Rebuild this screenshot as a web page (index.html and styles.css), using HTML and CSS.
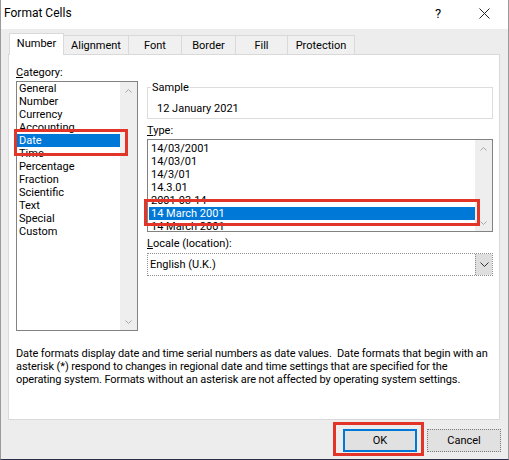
FILE: index.html
```html
<!DOCTYPE html>
<html>
<head>
<meta charset="utf-8">
<link rel="stylesheet" href="styles.css">
</head>
<body>
<div class="dialog">
  <div class="titlebar">
    <span class="title">Format Cells</span>
    <span class="help">?</span>
    <svg class="close" width="11" height="11" viewBox="0 0 11 11"><path d="M0.5 0.5 L10.5 10.5 M10.5 0.5 L0.5 10.5" stroke="#222" stroke-width="1" fill="none"/></svg>
  </div>
  <div class="tabs">
    <div class="tab active">Number</div>
    <div class="tab w-align">Alignment</div>
    <div class="tab w-font">Font</div>
    <div class="tab w-border">Border</div>
    <div class="tab w-fill">Fill</div>
    <div class="tab w-prot">Protection</div>
  </div>
  <div class="panel">
    <div class="cols">
      <div class="left">
        <div class="label"><u>C</u>ategory:</div>
        <div class="listbox cat">
          <div class="items">
            <div class="item">General</div>
            <div class="item">Number</div>
            <div class="item">Currency</div>
            <div class="item">Accounting</div>
            <div class="item sel">Date</div>
            <div class="item">Time</div>
            <div class="item">Percentage</div>
            <div class="item">Fraction</div>
            <div class="item">Scientific</div>
            <div class="item">Text</div>
            <div class="item">Special</div>
            <div class="item">Custom</div>
          </div>
          <div class="vscroll">
            <svg width="7" height="4" viewBox="0 0 7 4"><path d="M0.5 3.5 L3.5 0.5 L6.5 3.5" stroke="#a8a8a8" fill="none"/></svg>
            <svg width="7" height="4" viewBox="0 0 7 4"><path d="M0.5 0.5 L3.5 3.5 L6.5 0.5" stroke="#a8a8a8" fill="none"/></svg>
          </div>
          <span class="mark mark-cat"></span>
        </div>
      </div>
      <div class="right">
        <fieldset class="sample">
          <legend>Sample</legend>
          <div class="sample-text">12 January 2021</div>
        </fieldset>
        <div class="label type-label"><u>T</u>ype:</div>
        <div class="listbox typ">
          <div class="items">
            <div class="item">14/03/2001</div>
            <div class="item">14/03/01</div>
            <div class="item">14/3/01</div>
            <div class="item">14.3.01</div>
            <div class="item">2001-03-14</div>
            <div class="item sel">14 March 2001</div>
            <div class="item">14 March 2001</div>
          </div>
          <div class="vscroll">
            <svg width="7" height="4" viewBox="0 0 7 4"><path d="M0.5 3.5 L3.5 0.5 L6.5 3.5" stroke="#a8a8a8" fill="none"/></svg>
            <svg width="7" height="4" viewBox="0 0 7 4"><path d="M0.5 0.5 L3.5 3.5 L6.5 0.5" stroke="#a8a8a8" fill="none"/></svg>
          </div>
          <span class="mark mark-type"></span>
        </div>
        <div class="label locale-label"><u>L</u>ocale (location):</div>
        <div class="combo">
          <span class="combo-text">English (U.K.)</span>
          <span class="combo-btn"><svg width="9" height="5" viewBox="0 0 9 5"><path d="M0.5 0.5 L4.5 4.5 L8.5 0.5" stroke="#333" fill="none"/></svg></span>
        </div>
      </div>
    </div>
    <p class="desc">Date formats display date and time serial numbers as date values.&nbsp; Date formats that begin with an<br>asterisk (*) respond to changes in regional date and time settings that are specified for the<br>operating system. Formats without an asterisk are not affected by operating system settings.</p>
  </div>
  <div class="buttons">
    <div class="btn ok">OK<span class="mark mark-ok"></span></div>
    <div class="btn cancel">Cancel</div>
  </div>
</div>
</body>
</html>
```

FILE: styles.css
```css
* { box-sizing: border-box; }
html, body { margin: 0; padding: 0; }
body {
  width: 509px;
  height: 460px;
  overflow: hidden;
  font-family: Roboto, "Noto Sans", sans-serif;
  font-size: 11px;
  color: #000;
}
.dialog {
  width: 509px;
  height: 460px;
  background: #ededed;
  border-left: 1px solid #9a9a9a;
  border-right: 1px solid #9a9a9a;
  border-bottom: 1px solid #2c2c4c;
  display: flex;
  flex-direction: column;
}
.titlebar {
  height: 29px;
  background: #fff;
  display: flex;
  align-items: center;
  padding-left: 3px;
  padding-bottom: 3px;
  flex: none;
}
.title { font-size: 12px; flex: 1; }
.help { font-size: 13px; width: 44px; }
.close { margin-right: 18px; }
.tabs {
  display: flex;
  align-items: flex-end;
  height: 25px;
  padding-left: 8px;
  flex: none;
}
.tab {
  height: 19px;
  border: 1px solid #d9d9d9;
  border-bottom: none;
  border-left: none;
  background: #f0f0f0;
  display: flex;
  align-items: center;
  justify-content: center;
}
.tab.active {
  height: 22px;
  width: 55px;
  background: #fff;
  border-left: 1px solid #d9d9d9;
  margin-bottom: -1px;
  position: relative;
  z-index: 1;
  padding-bottom: 2px;
}
.w-align { width: 65px; }
.w-font { width: 53px; }
.w-border { width: 54px; }
.w-fill { width: 52px; }
.w-prot { width: 67px; }
.panel {
  margin-left: 7px;
  width: 492px;
  height: 366px;
  background: #fff;
  border: 1px solid #d9d9d9;
  padding: 11px 0 0 7px;
  flex: none;
}
.cols { display: flex; }
.left { width: 122px; flex: none; }
.right { width: 346px; margin-left: 9px; padding-top: 15px; }
.label { height: 13px; line-height: 13px; white-space: nowrap; }
.listbox {
  position: relative;
  border: 1px solid #828282;
  display: flex;
  background: #fff;
}
.cat { width: 122px; height: 250px; margin-top: 2px; }
.items { flex: 1; overflow: hidden; }
.item {
  height: 13px;
  line-height: 14px;
  padding-left: 2px;
  white-space: nowrap;
}
.item.sel { background: #0078d7; color: #fff; }
.vscroll {
  width: 17px;
  background: #eeeeee;
  display: flex;
  flex-direction: column;
  justify-content: space-between;
  align-items: center;
  padding: 7px 0 6px 0;
}
.mark {
  position: absolute;
  border: 3px solid #e3342a;
  pointer-events: none;
}
.mark-cat { left: -3px; top: 47px; width: 114px; height: 27px; }
.sample {
  margin: 0;
  padding: 0 0 0 9px;
  border: 1px solid #dcdcdc;
  height: 38px;
  width: 346px;
}
.sample legend {
  padding: 0 1px;
  margin-left: -6px;
  line-height: 13px;
}
.sample-text { line-height: 13px; margin-top: 8px; }
.type-label { margin-top: 5px; }
.typ { width: 346px; height: 93px; margin-top: 2px; }
.typ .items { padding: 2px 0 0 1px; }
.typ .item { padding-left: 2px; }
.mark-type { left: -4px; top: 59px; width: 336px; height: 27px; }
.locale-label { margin-top: 5px; }
.combo {
  margin-top: 3px;
  width: 346px;
  height: 23px;
  border: 1px dotted #909090;
  display: flex;
  align-items: center;
}
.combo-text { flex: 1; padding-left: 2px; }
.combo-btn {
  width: 17px;
  height: 21px;
  background: #dedede;
  display: flex;
  align-items: center;
  justify-content: center;
  border-left: 1px dotted #909090;
}
.desc {
  margin: 16px 0 0 0;
  line-height: 13px;
  white-space: nowrap;
  letter-spacing: -0.1px;
}
.buttons {
  display: flex;
  justify-content: flex-end;
  gap: 10px;
  padding: 9px 7px 0 0;
}
.btn {
  width: 74px;
  height: 23px;
  background: #e1e1e1;
  display: flex;
  align-items: center;
  justify-content: center;
  position: relative;
}
.ok { border: 2px solid #0078d7; }
.cancel { border: 1px dotted #7a7a7a; }
.mark-ok { left: -12px; top: -9px; width: 91px; height: 34px; }
```
